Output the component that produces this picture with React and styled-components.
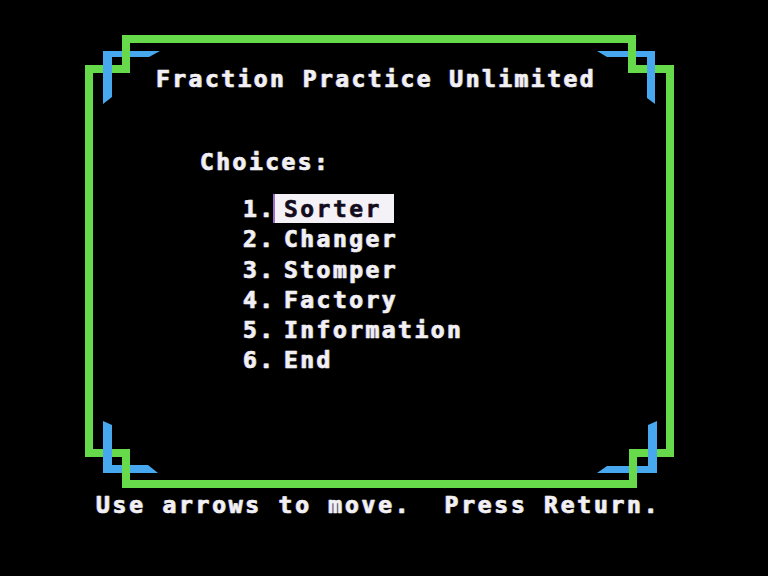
import React from "react";
import styled, { createGlobalStyle } from "styled-components";

const GlobalStyle = createGlobalStyle`
  html, body {
    margin: 0;
    padding: 0;
    background: #000;
  }
`;

const GREEN = "#66da4a";
const BLUE = "#48a8ef";

const Screen = styled.div`
  position: relative;
  width: 768px;
  height: 576px;
  overflow: hidden;
  background: #000;
  display: flex;
  flex-direction: column;
  font-family: "DejaVu Sans Mono", "Liberation Mono", monospace;
  font-weight: bold;
  font-size: 23px;
  line-height: 30px;
  letter-spacing: 2.45px;
  color: #f2f0f4;
  -webkit-text-stroke: 0.6px currentColor;
  text-shadow: -1px 0 rgba(190, 110, 255, 0.55), 1px 0 rgba(120, 220, 90, 0.45);
  white-space: pre;
`;

const FrameArt = styled.svg`
  position: absolute;
  inset: 0;
  pointer-events: none;
`;

const Content = styled.div`
  position: relative;
  display: flex;
  flex-direction: column;
`;

const Title = styled.div`
  margin-top: 64px;
  padding-left: 156px;
`;

const Heading = styled.div`
  margin-top: 53px;
  padding-left: 200px;
`;

const Menu = styled.ol`
  list-style: none;
  margin: 17px 0 0;
  padding: 0 0 0 243px;
  display: flex;
  flex-direction: column;
`;

const Row = styled.li`
  display: flex;
  height: 30.3px;
  align-items: flex-start;
`;

const Num = styled.span`
  width: 32px;
`;

const Label = styled.span`
  display: inline-block;
  height: 29px;
  padding: 0 12px 0 9px;
  ${({ $active }) =>
    $active &&
    `
    background: #f4f2f6;
    color: #140c1c;
    text-shadow: none;
    box-shadow: -2px 0 0 rgba(190, 140, 255, 0.8);
  `}
`;

const Footer = styled.div`
  margin-top: 114px;
  padding-left: 96px;
  letter-spacing: 2.75px;
`;

const items = ["Sorter", "Changer", "Stomper", "Factory", "Information", "End"];

// green outline with stepped corners, blue brackets woven through each corner
const Frame = () => (
  <FrameArt width="768" height="576" viewBox="0 0 768 576">
    <g fill={BLUE}>
      <polygon points="103,51 160,51 149,57 103,57" />
      <polygon points="597,51 655,51 655,57 607,57" />
      <polygon points="103,465 148,465 158,473 103,473" />
      <polygon points="607,466 657,466 657,473 597,473" />
    </g>
    <path
      d="M126 39 H632 V69 H670 V453 H633 V484 H126 V453 H89 V69 H126 Z"
      fill="none"
      stroke={GREEN}
      strokeWidth="8"
      strokeLinejoin="miter"
    />
    <g fill={BLUE}>
      <polygon points="103,51 112,51 112,97 103,104" />
      <polygon points="647,51 655,51 655,104 647,98" />
      <polygon points="103,421 112,425 112,473 103,473" />
      <polygon points="648,425 657,421 657,473 648,473" />
    </g>
  </FrameArt>
);

export default function App() {
  return (
    <>
      <GlobalStyle />
      <Screen>
        <Frame />
        <Content>
          <Title>Fraction Practice Unlimited</Title>
          <Heading>Choices:</Heading>
          <Menu>
            {items.map((name, i) => (
              <Row key={name}>
                <Num>{i + 1}.</Num>
                <Label $active={i === 0}>{name}</Label>
              </Row>
            ))}
          </Menu>
          <Footer>Use arrows to move.  Press Return.</Footer>
        </Content>
      </Screen>
    </>
  );
}
